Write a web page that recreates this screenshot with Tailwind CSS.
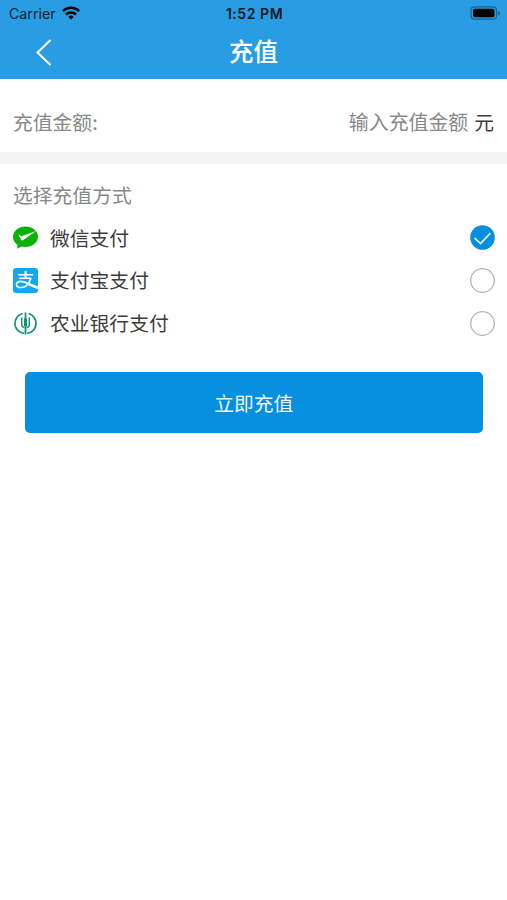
<!DOCTYPE html>
<html lang="zh-CN">
<head>
<meta charset="utf-8">
<meta name="viewport" content="width=device-width, initial-scale=1">
<title>充值</title>
<script src="https://cdn.jsdelivr.net/npm/@tailwindcss/browser@4"></script>
</head>
<body class="min-h-screen bg-white font-['Noto_Sans_CJK_SC',sans-serif] text-[19.8px] text-[#3c3c3c]">
<header class="h-[79px] bg-[#289de3]">
  <div class="grid h-[27px] grid-cols-3 items-center pl-[9px] pr-[7px] font-[Inter,sans-serif] text-[14px] leading-[27px] text-[#08202f]">
    <div class="flex items-center gap-[6px]">
      <span class="text-[14.2px]">Carrier</span>
      <svg class="mb-[2px] h-[14px] w-[18px]" viewBox="0 0 18 14" fill="none" stroke="#000" stroke-width="2.5">
        <path d="M.9 5.2a11.5 11.5 0 0 1 16.2 0M4 8.5a7.1 7.1 0 0 1 10 0"/>
        <path d="M9 13.5 6.4 10.9a3.7 3.7 0 0 1 5.2 0z" fill="#000" stroke="none"/>
      </svg>
    </div>
    <span class="text-center text-[14px] font-semibold tracking-[0.55px] text-[#061722]">1:52 PM</span>
    <svg class="mb-[1px] h-[14px] w-[30px] justify-self-end" viewBox="0 0 30 14">
      <rect x="1" y=".8" width="25.5" height="12.4" rx="3.5" fill="none" stroke="#17628f" stroke-width="1.2"/>
      <rect x="3" y="2.7" width="21.5" height="8.6" rx="1.7" fill="#000"/>
      <path d="M28 5v4.500q2-.8 2-2.250T28 5z" fill="#17628f"/>
    </svg>
  </div>
  <div class="grid h-[49px] grid-cols-3 items-center">
    <svg class="ml-[35px] h-[28px] w-[18px]" viewBox="0 0 18 28" fill="none" stroke="#fff" stroke-width="2"><path d="M15.500 2 2.500 14.500 15.500 27"/></svg>
    <h1 class="pb-[2px] text-center text-[24.500px] font-medium leading-[47px] text-white">充值</h1>
  </div>
</header>
<main>
  <section class="flex h-[85px] items-center justify-between border-b-[12px] border-[#f4f4f4] px-[13px] pt-[12px]">
    <span class="text-[#888]">充值金额:</span>
    <div class="flex gap-[6px]"><span class="text-[19.900px] text-[#888]">输入充值金额</span><span>元</span></div>
  </section>
  <section class="pl-[13px] pr-[12px] pt-[10px]">
    <h2 class="h-[42px] leading-[42px] text-[#888]">选择充值方式</h2>
    <ul>
      <li class="flex h-[43px] items-center">
        <svg class="h-[25px] w-[25px]" viewBox="0 0 25 25">
          <path d="M12.500 1.400C5.500 1.400 0 6 0 11.700c0 3.400 1.800 6.300 4.700 8.200L4 23.800l4.700-2.300c1.200.3 2.500.5 3.800.5 6.900 0 12.500-4.600 12.500-10.300S19.400 1.400 12.500 1.400z" fill="#09b207"/>
          <path d="M5.300 9.400 8.600 11.300 23.500 5.800 10 15.300Q8.800 16.100 8.100 14.800z" fill="#fff"/>
        </svg>
        <span class="ml-[12px] grow">微信支付</span>
        <svg class="h-[25px] w-[25px]" viewBox="0 0 25 25"><circle cx="12.500" cy="12.500" r="12.300" fill="#078ee0"/><path d="m4.500 12.800 6 5.700 10-10.300" fill="none" stroke="#e7f4fc" stroke-width="1.700"/></svg>
      </li>
      <li class="flex h-[43px] items-center">
        <svg class="h-[25px] w-[25px]" viewBox="0 0 25 25">
          <rect width="25" height="25" rx="3" fill="#10a9ed"/>
          <g fill="none" stroke="#fff">
            <path d="M5.300 6.700H20M6.300 10.300h11.500" stroke-width="1.400"/>
            <path d="M12.600 3.200v7.500" stroke-width="2.200"/>
            <path d="M18 10c-1.500 4.500-4.200 9.500-9.600 9.500-3 0-5-1.100-5-3.100 0-1.800 1.700-3 4.300-3 4.100 0 8.400 2.800 17.300 6.600" stroke-width="1.600"/>
            <path d="M16 16.200 25 19.900" stroke-width="2.600"/>
          </g>
        </svg>
        <span class="ml-[12px] grow pb-[1px]">支付宝支付</span>
        <svg class="h-[25px] w-[25px]" viewBox="0 0 25 25"><circle cx="12.500" cy="12.500" r="11.800" fill="none" stroke="#b5b5b5" stroke-width="1.300"/></svg>
      </li>
      <li class="flex h-[43px] items-center">
        <svg class="h-[25px] w-[25px]" viewBox="0 0 25 25" fill="none" stroke="#139078">
          <path d="M9.500 2.500a10.200 10.200 0 0 0 1.500 20M15.500 2.500a10.200 10.200 0 0 1-1.500 20" stroke-width="1.700"/>
          <path d="M12.500 1.500v7M12.500 15v8.500" stroke-width="1.800"/>
          <path d="M8.700 6.500V14q0 2 2.600 2.500M16.300 6.500V14q0 2-2.600 2.500" stroke-width="1.400"/>
          <path d="M11 7.500v7l1.500 2 1.500-2v-7z" fill="#139078" stroke="none"/>
        </svg>
        <span class="ml-[12px] grow pb-[1px]">农业银行支付</span>
        <svg class="h-[25px] w-[25px]" viewBox="0 0 25 25"><circle cx="12.500" cy="12.500" r="11.800" fill="none" stroke="#b5b5b5" stroke-width="1.300"/></svg>
      </li>
    </ul>
    <button class="mx-[12px] mt-[27px] block h-[61px] w-[457.500px] rounded-[5px] bg-[#068ee0] text-[#eef8fe]">立即充值</button>
  </section>
</main>
</body>
</html>
